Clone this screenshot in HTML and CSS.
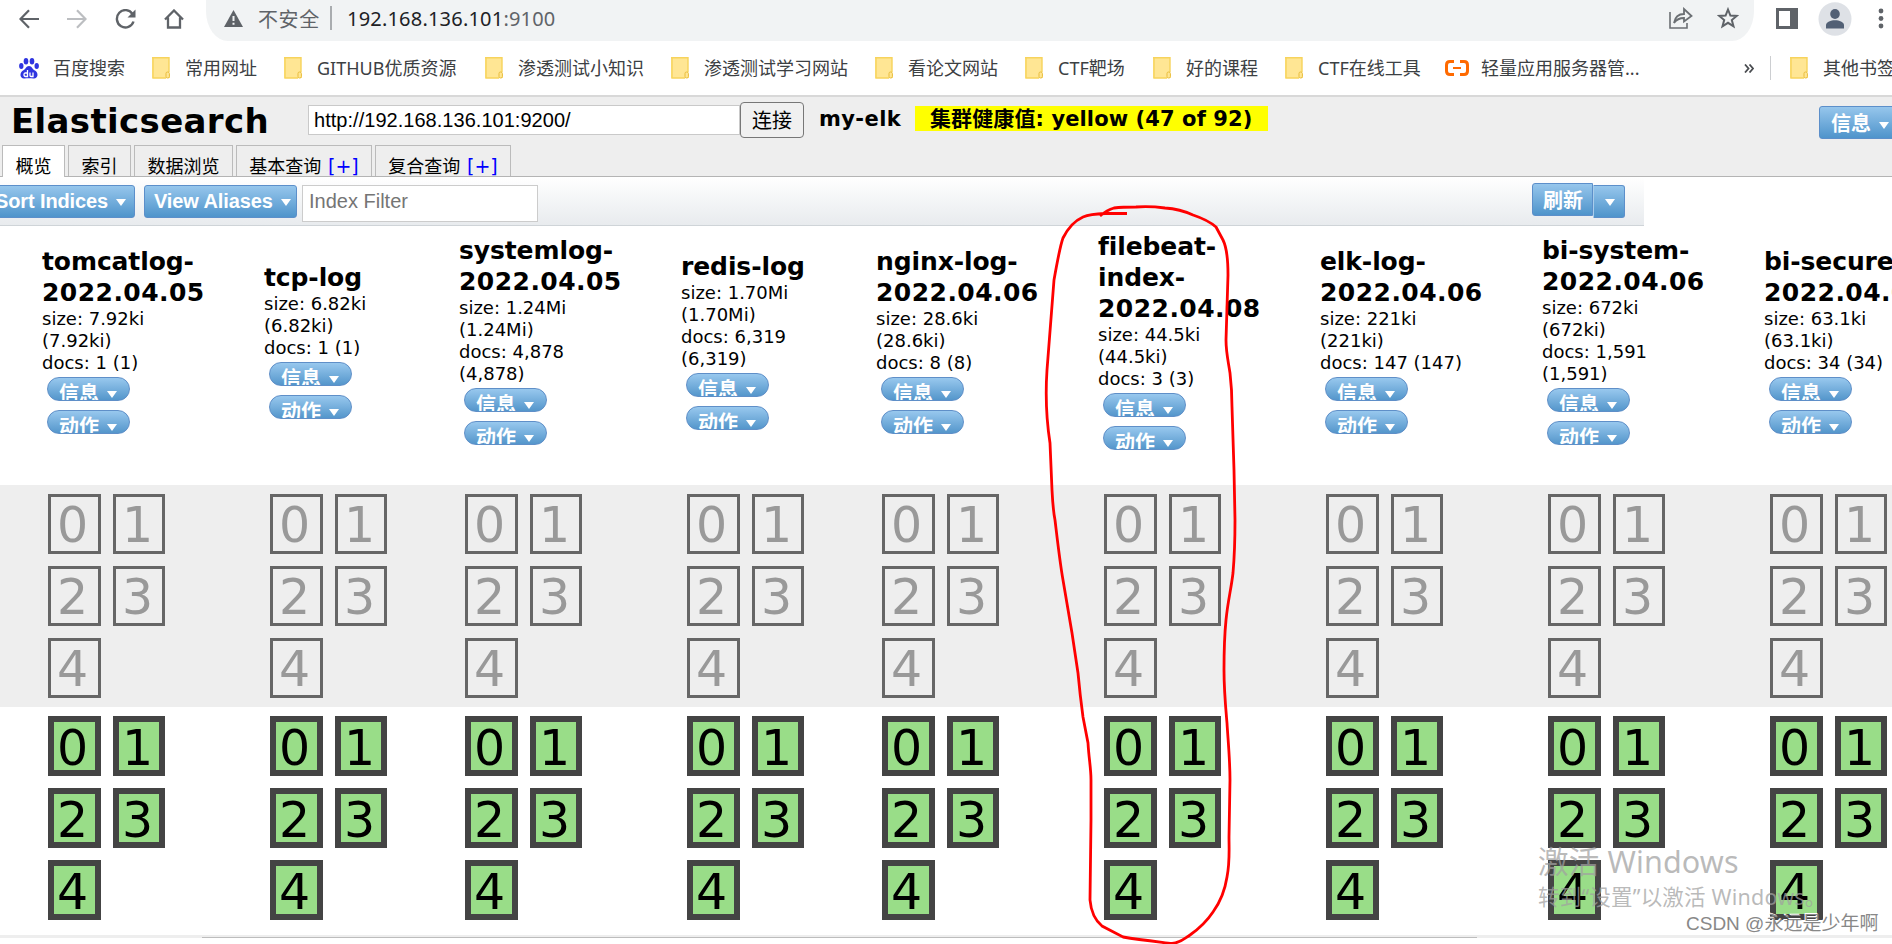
FILE: index.html
```html
<!DOCTYPE html>
<html lang="zh-CN">
<head>
<meta charset="utf-8">
<title>Elasticsearch</title>
<link rel="stylesheet" href="styles.css">
</head>
<body>
<svg class="defs" width="0" height="0">
  <symbol id="folder" viewBox="0 0 18 22"><path d="M0 0H17V17L18 18V21H0Z" fill="#ffe694"/><path d="M1 0V21H14M0 .7H17V15" fill="none" stroke="#f7d35c" stroke-width="1.4"/><rect x="14" y="15" width="3.4" height="6" rx="1.5" fill="#ffe694" stroke="#e9bd3c"/></symbol>
</svg>
<div class="screen">
  <div class="nav">
    <div class="nav-icons">
      <svg width="20" height="20" viewBox="0 0 20 20"><path d="M20 10H2M10 1.2 1.5 10l8.500 8.800" fill="none" stroke="#5f6368" stroke-width="2.200"/></svg>
      <svg width="20" height="20" viewBox="0 0 20 20"><path d="M0 10H18M10 1.200l8.500 8.800-8.500 8.800" fill="none" stroke="#bcbec1" stroke-width="2.200"/></svg>
      <svg width="21" height="20" viewBox="0 0 21 20"><path d="M17.500 5A8.500 8.700 0 1 0 18.500 12.500" fill="none" stroke="#5f6368" stroke-width="2.400"/><path d="M20.500.5V8.500H12.500Z" fill="#5f6368"/></svg>
      <svg width="20" height="20" viewBox="0 0 20 20"><path d="M1 10.500 10 1.500l9 9M4 8.500V18.500H16V8.500" fill="none" stroke="#5f6368" stroke-width="2.300"/></svg>
    </div>
    <div class="omnibox">
      <svg class="warn" width="19" height="17" viewBox="0 0 19 17"><path d="M9.500 0 19 17H0Z" fill="#5f6368"/><path d="M9.500 6v5M9.500 12.700v2" stroke="#f1f3f4" stroke-width="2"/></svg>
      <span class="unsafe">不安全</span><i class="bar"></i>
      <span class="url">192.168.136.101<em>:9100</em></span>
      <svg class="share" width="24" height="22" viewBox="0 0 24 22"><path d="M1 5V21H18V16" fill="none" stroke="#6b6f73" stroke-width="1.600"/><path d="M5 16C6 10 10 7 15 7V2l7.500 7L15 14.500V11C10 11 7.500 12.500 5 16Z" fill="none" stroke="#6b6f73" stroke-width="1.800"/></svg>
      <svg width="22" height="22" viewBox="0 0 22 22"><path d="m11 2.500 2.400 6 6.300.4-4.900 4.100 1.700 6.300L11 15.800 5.500 19.300 7.200 13 2.300 8.900l6.300-.4Z" fill="none" stroke="#5f6368" stroke-width="2"/></svg>
    </div>
    <svg class="panel" width="22" height="21" viewBox="0 0 22 21"><path d="M0 0H22V21H0ZM3 3V18H14V3Z" fill="#5f6368" fill-rule="evenodd"/></svg>
    <svg class="avatar" width="34" height="34" viewBox="0 0 34 34"><ellipse cx="17" cy="17" rx="16.500" ry="16.800" fill="#dee1e6"/><ellipse cx="17" cy="12" rx="4.800" ry="4.900" fill="#526075"/><path d="M8 26.500V23C8 20 13 18.300 17 18.300S26 20 26 23V26.500Z" fill="#526075"/></svg>
    <svg class="dots" width="6" height="22" viewBox="0 0 6 22"><g fill="#5f6368"><circle cx="3" cy="3" r="2.400"/><circle cx="3" cy="10.500" r="2.400"/><circle cx="3" cy="18" r="2.400"/></g></svg>
  </div>
  <div class="bookmarks">
    <span class="bm"><svg width="20" height="21" viewBox="0 0 20 21"><g fill="#2f35e0"><ellipse cx="7" cy="3.300" rx="2.300" ry="3.200"/><ellipse cx="13" cy="3.300" rx="2.300" ry="3.200"/><ellipse cx="2.300" cy="8" rx="2.200" ry="3"/><ellipse cx="17.700" cy="8" rx="2.200" ry="3"/><path d="M10 8C13 8 13 11 16 12.500 20 15 19 21 14.500 20.500 11 20 9 20 5.500 20.500 1 21 0 15 4 12.500 7 11 7 8 10 8Z"/></g><path d="M8.500 12V18.500H6.500Q5 18.500 5 16.700T6.500 15H8.500M11 14.500V17.500Q11 18.500 12 18.500H14V14.500" fill="none" stroke="#fff" stroke-width="1.300"/></svg><b>百度搜索</b></span>
    <span class="bm"><svg class="fd"><use href="#folder"/></svg><b>常用网址</b></span>
    <span class="bm"><svg class="fd"><use href="#folder"/></svg><b>GITHUB优质资源</b></span>
    <span class="bm"><svg class="fd"><use href="#folder"/></svg><b>渗透测试小知识</b></span>
    <span class="bm"><svg class="fd"><use href="#folder"/></svg><b>渗透测试学习网站</b></span>
    <span class="bm"><svg class="fd"><use href="#folder"/></svg><b>看论文网站</b></span>
    <span class="bm"><svg class="fd"><use href="#folder"/></svg><b>CTF靶场</b></span>
    <span class="bm"><svg class="fd"><use href="#folder"/></svg><b>好的课程</b></span>
    <span class="bm"><svg class="fd"><use href="#folder"/></svg><b>CTF在线工具</b></span>
    <span class="bm ali"><svg width="24" height="16" viewBox="0 0 24 16"><path d="M9 1.500H5Q1.500 1.500 1.500 5V11Q1.500 14.500 5 14.500H9M15 1.500H19Q22.500 1.500 22.500 5V11Q22.500 14.500 19 14.500H15" fill="none" stroke="#ff6a00" stroke-width="3"/><path d="M8 8H16" stroke="#ff6a00" stroke-width="2"/></svg><b>轻量应用服务器管...</b></span>
    <span class="more"><svg width="10" height="9" viewBox="0 0 10 9"><path d="M1 .5 4.500 4.500 1 8.500M5.500.5 9 4.500 5.500 8.500" fill="none" stroke="#4a4d51" stroke-width="1.800"/></svg></span>
    <span class="bm other"><svg class="fd"><use href="#folder"/></svg><b>其他书签</b></span>
  </div>
  <div class="head">
    <div class="head-row">
      <h1>Elasticsearch</h1>
      <div class="addr">http://192.168.136.101:9200/</div>
      <div class="connect">连接</div>
      <div class="cluster">my-elk</div>
      <div class="health"><span>集群健康值: yellow (47 of 92)</span></div>
      <div class="btn info-top">信息<i class="arr"></i></div>
    </div>
    <div class="tabs">
      <div class="tab on">概览</div>
      <div class="tab">索引</div>
      <div class="tab t3">数据浏览</div>
      <div class="tab t4">基本查询 <a>[+]</a></div>
      <div class="tab t4">复合查询 <a>[+]</a></div>
    </div>
  </div>
  <div class="toolbar">
    <div class="btn sort">Sort Indices<i class="arr"></i></div>
    <div class="btn view">View Aliases<i class="arr"></i></div>
    <div class="filter">Index Filter</div>
    <div class="btn refresh">刷新</div>
    <div class="btn drop"><i class="arr"></i></div>
  </div>
  <div class="row heads">
    <div class="idx"><h2>tomcatlog-<br><span>2022.04.05</span></h2><p>size: 7.92ki<br>(7.92ki)<br>docs: 1 (1)</p><div class="pill">信息<i class="arr"></i></div><div class="pill">动作<i class="arr"></i></div></div>
    <div class="idx"><h2>tcp-log</h2><p>size: 6.82ki<br>(6.82ki)<br>docs: 1 (1)</p><div class="pill">信息<i class="arr"></i></div><div class="pill">动作<i class="arr"></i></div></div>
    <div class="idx"><h2>systemlog-<br><span>2022.04.05</span></h2><p>size: 1.24Mi<br>(1.24Mi)<br>docs: 4,878<br>(4,878)</p><div class="pill">信息<i class="arr"></i></div><div class="pill">动作<i class="arr"></i></div></div>
    <div class="idx"><h2>redis-log</h2><p>size: 1.70Mi<br>(1.70Mi)<br>docs: 6,319<br>(6,319)</p><div class="pill">信息<i class="arr"></i></div><div class="pill">动作<i class="arr"></i></div></div>
    <div class="idx"><h2>nginx-log-<br><span>2022.04.06</span></h2><p>size: 28.6ki<br>(28.6ki)<br>docs: 8 (8)</p><div class="pill">信息<i class="arr"></i></div><div class="pill">动作<i class="arr"></i></div></div>
    <div class="idx"><h2>filebeat-<br>index-<br><span>2022.04.08</span></h2><p>size: 44.5ki<br>(44.5ki)<br>docs: 3 (3)</p><div class="pill">信息<i class="arr"></i></div><div class="pill">动作<i class="arr"></i></div></div>
    <div class="idx"><h2>elk-log-<br><span>2022.04.06</span></h2><p>size: 221ki<br>(221ki)<br>docs: 147 (147)</p><div class="pill">信息<i class="arr"></i></div><div class="pill">动作<i class="arr"></i></div></div>
    <div class="idx"><h2>bi-system-<br><span>2022.04.06</span></h2><p>size: 672ki<br>(672ki)<br>docs: 1,591<br>(1,591)</p><div class="pill">信息<i class="arr"></i></div><div class="pill">动作<i class="arr"></i></div></div>
    <div class="idx"><h2>bi-secure-<br><span>2022.04.06</span></h2><p>size: 63.1ki<br>(63.1ki)<br>docs: 34 (34)</p><div class="pill">信息<i class="arr"></i></div><div class="pill">动作<i class="arr"></i></div></div>
  </div>
  <div class="row unassigned">
    <div class="shards"><s>0</s><s>1</s><s>2</s><s>3</s><s>4</s></div>
    <div class="shards"><s>0</s><s>1</s><s>2</s><s>3</s><s>4</s></div>
    <div class="shards"><s>0</s><s>1</s><s>2</s><s>3</s><s>4</s></div>
    <div class="shards"><s>0</s><s>1</s><s>2</s><s>3</s><s>4</s></div>
    <div class="shards"><s>0</s><s>1</s><s>2</s><s>3</s><s>4</s></div>
    <div class="shards"><s>0</s><s>1</s><s>2</s><s>3</s><s>4</s></div>
    <div class="shards"><s>0</s><s>1</s><s>2</s><s>3</s><s>4</s></div>
    <div class="shards"><s>0</s><s>1</s><s>2</s><s>3</s><s>4</s></div>
    <div class="shards"><s>0</s><s>1</s><s>2</s><s>3</s><s>4</s></div>
  </div>
  <div class="row started">
    <div class="shards"><s>0</s><s>1</s><s>2</s><s>3</s><s>4</s></div>
    <div class="shards"><s>0</s><s>1</s><s>2</s><s>3</s><s>4</s></div>
    <div class="shards"><s>0</s><s>1</s><s>2</s><s>3</s><s>4</s></div>
    <div class="shards"><s>0</s><s>1</s><s>2</s><s>3</s><s>4</s></div>
    <div class="shards"><s>0</s><s>1</s><s>2</s><s>3</s><s>4</s></div>
    <div class="shards"><s>0</s><s>1</s><s>2</s><s>3</s><s>4</s></div>
    <div class="shards"><s>0</s><s>1</s><s>2</s><s>3</s><s>4</s></div>
    <div class="shards"><s>0</s><s>1</s><s>2</s><s>3</s><s>4</s></div>
    <div class="shards"><s>0</s><s>1</s><s>2</s><s>3</s><s>4</s></div>
  </div>
  <div class="scroll"><i></i></div>

  <svg class="ink" width="1892" height="944" viewBox="0 0 1892 944"><path d="M1127 213.500 1105 213.500Q1090 214 1083 217C1072 222 1067 230 1063 238Q1060 246 1054 280C1052 305 1050 330 1047 370 1045 400 1048 430 1050 443L1052 490Q1053 510 1055 520C1058 545 1060 563 1063 580L1072 633 1078 673Q1080 695 1083 717L1088 743C1089 760 1091 768 1091 780V820L1090 900C1091 912 1096 921 1102 926L1123 937C1140 940 1160 942 1172 943.500 1180 943 1184 939 1190 935 1200 928 1207 921 1213 912 1221 901 1225 890 1227 877 1230 862 1229 850 1229 837L1230 780C1230 760 1228 740 1227 723 1225 700 1224 690 1224 670Q1224 640 1226 620C1228 600 1231 590 1233 573Q1235 550 1235 520L1234 470 1232 407Q1232 390 1230 373C1228 360 1226 352 1226 340L1228 275Q1228 250 1223 240L1216 227Q1208 220 1193 215 1180 209 1165 208 1150 206 1136 207 1122 207 1114 208 1107 210 1100 216"/></svg>
  <div class="wm-win"><div class="w1">激活 Windows</div><div class="w2">转到“设置”以激活 Windows。</div></div>
  <div class="wm-csdn">CSDN @永远是少年啊</div>
</div>
</body>
</html>
```
FILE: styles.css
```css
* { box-sizing: border-box; }
body { margin: 0; overflow: hidden; background: #fff; color: #000; font-family: "DejaVu Sans", "Noto Sans CJK SC", sans-serif; }
h1, h2, p { margin: 0; }
.defs { position: absolute; }
.screen { position: relative; width: 1892px; height: 944px; overflow: hidden; white-space: nowrap; }

.nav { display: flex; align-items: flex-start; height: 41px; }
.nav-icons { width: 206px; padding: 9px 0 0 19px; display: flex; gap: 28px; }
.omnibox { width: 1548px; height: 41px; padding: 0 15px 5px 18px; border-radius: 0 0 22px 22px / 0 0 30px 30px; background: #f1f3f4; display: flex; align-items: center; font: 20px "Noto Sans", "Noto Sans CJK SC", sans-serif; color: #5f6368; }
.unsafe { margin-left: 15px; letter-spacing: .6px; width: 72px; }
.bar { width: 2px; height: 24px; margin-right: 15px; background: #a9acaf; }
.url { color: #202124; letter-spacing: .2px; }
.url em { font-style: normal; color: #5f6368; }
.share { margin-left: auto; margin-right: 24px; }
.panel { margin: 8px 0 0 22px; }
.avatar { margin: 2px 0 0 20px; }
.dots { margin: 8px 0 0 26px; flex: none; }

.bookmarks { height: 54px; padding-left: 19px; display: grid; grid-template-columns: 133px 132px 201px 186px 204px 150px 128px 132px 160px 299px 27px 200px; align-items: center; font: 18px "Noto Sans", "Noto Sans CJK SC", sans-serif; color: #3c4043; }
.bm { display: flex; align-items: center; gap: 15px; }
.bm b { font-weight: 400; margin-top: -2px; }
.bm:first-child { gap: 14px; }
.bm .fd { width: 18px; height: 22px; flex: none; }
.bm.ali { gap: 12px; }
.more { display: flex; border-right: 1px solid #ccced1; height: 24px; align-items: center; }
.other { padding-left: 19px; }

.head { height: 82px; border-top: 2px solid #d8d8d8; background: #eee; border-bottom: 1px solid #b4b4b4; }
.head-row { display: flex; height: 48px; padding: 5px 0 0 11px; align-items: flex-start; }
.head-row > * { flex: none; }
h1 { width: 297px; font-size: 34px; line-height: 38px; letter-spacing: .35px; }
.addr { width: 432px; height: 30px; margin-top: 3px; padding-left: 5px; border: 1px solid #c9c9c9; background: #fff; font: 20px/28px "Liberation Sans", sans-serif; letter-spacing: .03px; }
.connect { width: 64px; height: 36px; border: 1.500px solid #777; border-radius: 4px; background: #f0f0f0; text-align: center; font: 20px/33px "Noto Sans CJK SC", sans-serif; }
.cluster, .health { margin-top: 4px; height: 25px; line-height: 27px; font-size: 21px; font-weight: 700; }
.cluster { margin-left: 15px; width: 96px; letter-spacing: .4px; }
.health { width: 353px; padding-left: 15px; background: #ff0; letter-spacing: .1px; }
.btn { height: 33px; border: 1px solid #5c8fca; border-radius: 3px; background: linear-gradient(#96c6ec, #4f94cb); color: #fff; font: bold 20px/31px "Liberation Sans", "Noto Sans CJK SC", sans-serif; }
.arr { display: inline-block; border: 5.500px solid transparent; border-top: 7px solid #fff; border-bottom: 0; }
.btn .arr, .pill .arr { margin-left: 8px; vertical-align: 2px; }
.info-top { margin: 4px 0 0 551px; width: 90px; padding-left: 11px; line-height: 35px; }
.tabs { display: flex; gap: 3px; padding-left: 2px; height: 32px; align-items: stretch; }
.tab { width: 63px; border: 1px solid #bbb; border-bottom: 0; text-align: center; font: 18px/40px "Noto Sans", "Noto Sans CJK SC", sans-serif; height: 31px; overflow: hidden; }
.tab.on { background: #fff; height: 32px; }
.tab a { color: #00f; font-family: "DejaVu Sans", sans-serif; margin-left: 2px; font-size: 19px; }
.t3 { width: 99px; }
.t4 { width: 136px; }

.toolbar { width: 1644px; height: 49px; background: linear-gradient(#fff, #e8ebee); border-bottom: 1px solid #cfd4d8; display: flex; padding-top: 8px; }
.toolbar .btn { letter-spacing: -.12px; }
.sort { width: 146px; margin-left: -11px; padding-left: 5px; }
.view { width: 153px; margin-left: 9px; padding-left: 9px; }
.filter { width: 236px; height: 37px; margin-left: 5px; padding-left: 6px; border: 1px solid #ccc; background: #fff; color: #757575; font: 20px/31px "Liberation Sans", sans-serif; }
.refresh { width: 61px; margin: -2px 0 0 994px; padding-left: 10px; border-radius: 3px 0 0 3px; line-height: 35px; }
.drop { width: 32px; padding-left: 3px; border-radius: 0 3px 3px 0; border-left-color: #a9cdeb; }

.row { display: grid; grid-template-columns: 222px 195px 222px 195px 222px 222px 222px 222px 222px; padding-left: 42px; }
.heads { height: 259px; padding-top: 1px; align-items: center; }
.idx { padding-bottom: 32px; }
.idx h2 { font-size: 25px; line-height: 31px; letter-spacing: -.1px; }
.idx h2 span { letter-spacing: .45px; }
.idx p { font-size: 18px; line-height: 22px; }
.pill { width: 83px; height: 24px; margin: 3px 0 0 5px; padding-left: 11px; overflow: hidden; border: 1px solid #5f8fc8; border-radius: 12px; background: linear-gradient(#98c8ee, #5496cb); color: #fff; font: bold 20px/30px "Noto Sans CJK SC", sans-serif; }
.pill .arr { vertical-align: 3px; }
.pill + .pill { margin-top: 9px; }
.shards { display: grid; grid-template-columns: 53px 52px; grid-auto-rows: 60px; gap: 12px; padding: 9px 0 0 6px; }
.shards s { text-decoration: none; font-size: 49px; }
.unassigned { height: 222px; background: #eee; }
.unassigned s { border: 3px solid #666; color: #999; line-height: 58px; padding-left: 6px; }
.started { height: 228px; }
.started s { border: 6px solid #444; background: #9d8; line-height: 54px; padding-left: 3px; }
.scroll { height: 3px; background: #eee; display: flex; align-items: flex-end; padding-left: 202px; }
.scroll i { width: 1275px; height: 1px; background: #bdbdbd; }

.ink { position: absolute; left: 0; top: 0; fill: none; stroke: #f00; stroke-width: 2.800; }
.wm-win { position: absolute; left: 1538px; top: 842px; color: rgba(160, 160, 160, .72); font-family: "Noto Sans", "Noto Sans CJK SC", sans-serif; }
.w1 { font-size: 30.500px; line-height: 38px; letter-spacing: .15px; }
.w2 { font-size: 21.500px; line-height: 34px; letter-spacing: .2px; }
.wm-csdn { position: absolute; left: 1686px; top: 909px; font: 19px/30px "Liberation Sans", "Noto Sans CJK SC", sans-serif; color: #888; text-shadow: -1px -1px 0 #fff; }
```
